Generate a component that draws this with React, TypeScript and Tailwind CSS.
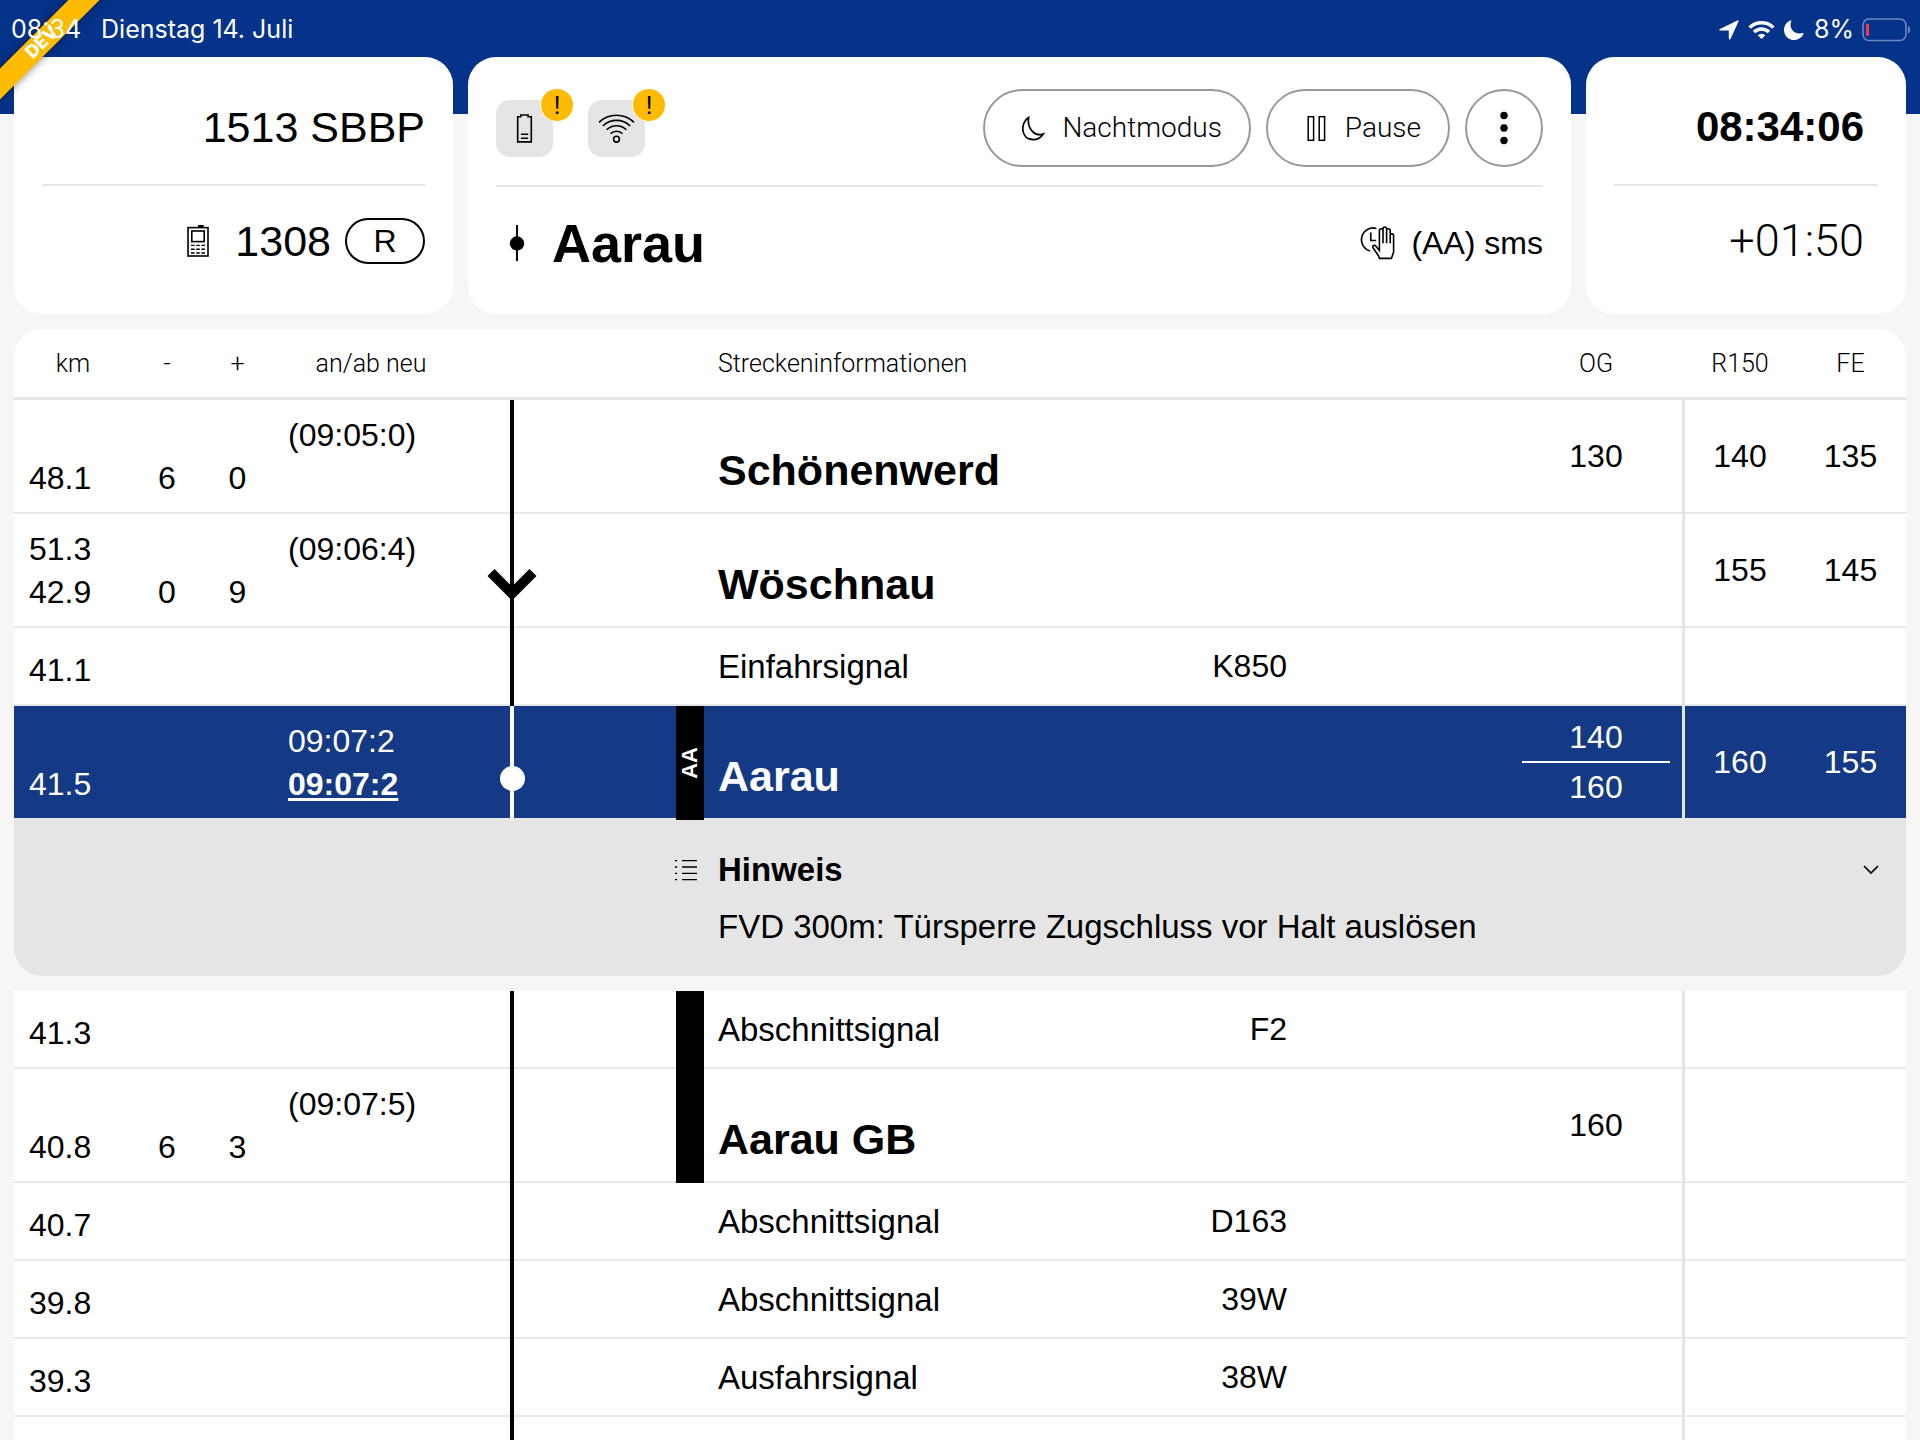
import type { ReactNode } from "react";
import { clsx } from "clsx";

type Row = {
  km: string[];
  minus?: string;
  plus?: string;
  times?: string[];
  name: string;
  value?: string;
  station?: boolean;
  og?: string[];
  r150?: string;
  fe?: string;
  marker?: "arrow" | "dot";
  bar?: boolean;
  barLabel?: string;
  active?: boolean;
};

const rowsBefore: Row[] = [
  { km: ["48.1"], minus: "6", plus: "0", times: ["(09:05:0)", ""], name: "Schönenwerd", station: true, og: ["130"], r150: "140", fe: "135" },
  { km: ["51.3", "42.9"], minus: "0", plus: "9", times: ["(09:06:4)", ""], name: "Wöschnau", station: true, r150: "155", fe: "145", marker: "arrow" },
  { km: ["41.1"], name: "Einfahrsignal", value: "K850" },
  { km: ["41.5"], times: ["09:07:2", "09:07:2"], name: "Aarau", station: true, og: ["140", "160"], r150: "160", fe: "155", marker: "dot", bar: true, barLabel: "AA", active: true },
];

const rowsAfter: Row[] = [
  { km: ["41.3"], name: "Abschnittsignal", value: "F2", bar: true },
  { km: ["40.8"], minus: "6", plus: "3", times: ["(09:07:5)", ""], name: "Aarau GB", station: true, og: ["160"], bar: true },
  { km: ["40.7"], name: "Abschnittsignal", value: "D163" },
  { km: ["39.8"], name: "Abschnittsignal", value: "39W" },
  { km: ["39.3"], name: "Ausfahrsignal", value: "38W" },
  { km: [], name: "" },
];

const light = "font-['Roboto','Liberation_Sans',sans-serif] font-light";

function PhoneIcon() {
  return (
    <svg width="22" height="32" viewBox="0 0 22 32" fill="none" stroke="#000" strokeWidth="1.6">
      <rect x="1" y="2.6" width="20" height="28.4" />
      <path d="M11 1.4h5.6" strokeWidth="2.8" />
      <rect x="4.8" y="6" width="12.4" height="10.6" />
      <path d="M4 20.4h14M4 24.2h14M4 28h14" strokeDasharray="3.6 1.6" strokeWidth="1.4" />
    </svg>
  );
}

function BatteryIcon() {
  return (
    <svg width="29" height="29" viewBox="0 0 29 29" fill="none" stroke="#000" strokeWidth="1.6">
      <path d="M7.7 2.7h3.1V1h7.3v1.7h3.2v25.2H7.7z" />
      <path d="M11 20.3h7.2M11 24.2h7.2" />
    </svg>
  );
}

function SignalIcon() {
  return (
    <svg width="37" height="29" viewBox="0 0 37 29" fill="none" stroke="#000" strokeWidth="1.6">
      <circle cx="18.5" cy="25.2" r="2.9" />
      <path d="M12.6 19.6a8.4 8.4 0 0 1 11.8 0M8.6 15.8a14 14 0 0 1 19.8 0M4.8 12a19.6 19.6 0 0 1 27.4 0M1 8.4a25 25 0 0 1 35 0" />
    </svg>
  );
}

function NightIcon() {
  return (
    <svg width="29" height="29" viewBox="0 0 29 29" fill="none" stroke="#000" strokeWidth="1.7">
      <path d="M9.6 3.6C1 8.6 1.4 25.6 14.2 25.6c4.6 0 8-2.4 10-5.6C16 23 7.8 14.6 9.6 3.6z" />
    </svg>
  );
}

function PauseIcon() {
  return (
    <svg width="29" height="29" viewBox="0 0 29 29" fill="none" stroke="#000" strokeWidth="1.5">
      <rect x="6.2" y="2.7" width="5.4" height="23.6" />
      <rect x="17.2" y="2.7" width="5.4" height="23.6" />
    </svg>
  );
}

function ClockHandIcon() {
  return (
    <svg width="36" height="34" viewBox="0 0 36 34" fill="none" stroke="#000" strokeWidth="1.6">
      <path d="M17.4 2.4A11.6 11.6 0 1 0 11 25" />
      <path d="M11.8 6.5v8h5.4" />
      <path d="M20.4 32.4C20 28.6 15.6 25 14 21.6c-.8-2 1.4-3.2 3-1.4l3.4 4.2V4.6a1.8 1.8 0 0 1 3.6 0v12.6V2.8a1.8 1.8 0 0 1 3.6 0v14.4V4.6a1.8 1.8 0 0 1 3.6 0v12.6V9.6a1.7 1.7 0 0 1 3.4 0v16.6l-2.2 6.2z" />
    </svg>
  );
}

function ListIcon() {
  return (
    <svg width="24" height="24" viewBox="0 0 24 24" stroke="#000" strokeWidth="1.3">
      <path d="M1 2.6h2.2M8 2.6h15M1 9h2.2M8 9h15M1 15.4h2.2M8 15.4h15M1 21.6h2.2M8 21.6h15" />
    </svg>
  );
}

function StatusBar() {
  return (
    <div className="relative z-10 flex h-[57px] items-center justify-between pr-[9px] pl-[11px] pt-0.5 font-['Inter',sans-serif] text-[25px] text-white">
      <div className="flex gap-5">
        <span>08:34</span>
        <span>Dienstag 14. Juli</span>
      </div>
      <div className="flex items-center">
        <svg width="20" height="20" viewBox="0 0 20 20" fill="#fff">
          <path d="M18.4.4c.9-.4 1.5.3 1.1 1.1l-8 17.4c-.4.9-1.7.7-1.7-.4v-7.9H1.3c-1.1 0-1.3-1.3-.4-1.7z" />
        </svg>
        <svg className="ml-2" width="29" height="20" viewBox="0 0 29 20" fill="none" stroke="#fff" strokeWidth="3.4">
          <path d="M2.6 7.6a17 17 0 0 1 23.8 0M7 12a10.8 10.8 0 0 1 15 0" />
          <path d="M14.5 19l-3.8-3.8a5.4 5.4 0 0 1 7.6 0z" fill="#fff" stroke="none" />
        </svg>
        <svg className="ml-2" width="20" height="20" viewBox="0 0 20 20" fill="#fff">
          <path d="M6.3.4c.6-.3 1.2.2.9.9C4.4 8.4 10.6 15.4 18.6 13c.7-.2 1.2.4.9 1C17.8 17.6 14.3 20 10.2 20 4.6 20 0 15.6 0 9.9 0 5.6 2.6 2 6.3.4z" />
        </svg>
        <span className="ml-[10px]">8%</span>
        <svg className="ml-2" width="49" height="24" viewBox="0 0 49 24" fill="none">
          <rect x="1" y="1" width="43" height="21.5" rx="6" stroke="#6d89be" strokeWidth="1.6" />
          <path d="M46 8.2c3 .8 3 6.4 0 7.2z" fill="#6d89be" />
          <rect x="4" y="5.5" width="3" height="12.5" rx="1.5" fill="#f0384f" />
        </svg>
      </div>
    </div>
  );
}

function WarningChip({ label, children }: { label: string; children: ReactNode }) {
  return (
    <div role="img" aria-label={label} className="relative flex size-[57px] items-center justify-center rounded-[14px] bg-[#e5e5e5]">
      {children}
      <span className="absolute -top-3 -right-[21px] flex size-[34px] items-center justify-center rounded-full border border-white bg-[#ffbb00] text-[26px] leading-none">
        !
      </span>
    </div>
  );
}

function PillButton({ icon, children }: { icon: ReactNode; children: ReactNode }) {
  return (
    <button
      type="button"
      className={clsx(light, "flex h-[78px] items-center gap-[14px] rounded-full border-2 border-[#999] pr-[27px] pl-[34px] text-[28px]")}
    >
      {icon}
      {children}
    </button>
  );
}

function Header() {
  return (
    <header className="flex gap-[15px] px-[14px]">
      <section className="w-[439px] rounded-[28px] bg-white px-7 pt-[46px] text-right text-[43px] leading-[48px]">
        <div className="border-b-2 border-[#e5e5e5] pb-[33px]">1513 SBBP</div>
        <div className="flex items-center justify-end pt-[31px]">
          <PhoneIcon />
          <span className="ml-[26px]">1308</span>
          <span className="ml-[14px] flex h-[46px] w-20 items-center justify-center rounded-full border-2 border-black text-[32px]">R</span>
        </div>
      </section>

      <section className="flex-1 rounded-[28px] bg-white px-7 pt-8 pb-[41px]">
        <div className="flex items-center justify-between border-b-2 border-[#e5e5e5] pb-[18px]">
          <div className="flex gap-[35px]">
            <WarningChip label="Akku schwach">
              <BatteryIcon />
            </WarningChip>
            <WarningChip label="Verbindung schwach">
              <SignalIcon />
            </WarningChip>
          </div>
          <div className="flex gap-[15px]">
            <PillButton icon={<NightIcon />}>Nachtmodus</PillButton>
            <PillButton icon={<PauseIcon />}>Pause</PillButton>
            <button type="button" aria-label="Menü" className="flex size-[78px] items-center justify-center rounded-full border-2 border-[#999]">
              <svg width="8" height="34" viewBox="0 0 8 34">
                <circle cx="4" cy="4.5" r="3.7" />
                <circle cx="4" cy="17" r="3.7" />
                <circle cx="4" cy="29.5" r="3.7" />
              </svg>
            </button>
          </div>
        </div>
        <div className="flex items-center justify-between pt-[26px]">
          <div className="flex items-center gap-[14px]">
            <svg width="42" height="36" viewBox="0 0 42 36">
              <path d="M21 0v36" stroke="#000" strokeWidth="2" />
              <circle cx="21" cy="18.5" r="7.2" />
            </svg>
            <h1 className="text-[54px] leading-[60px] font-bold">Aarau</h1>
          </div>
          <div className="flex items-center gap-4 text-[32px] leading-[43px]">
            <ClockHandIcon />
            (AA) sms
          </div>
        </div>
      </section>

      <section className="w-80 rounded-[28px] bg-white px-7 pt-[46px] text-right text-[42px] leading-[48px]">
        <div className="border-b-2 border-[#e5e5e5] pr-[14px] pb-[33px] font-bold">08:34:06</div>
        <div className={clsx(light, "pt-[31px] pr-[14px] text-[45px]")}>+01:50</div>
      </section>
    </header>
  );
}

function RouteLine({ marker, active }: Pick<Row, "marker" | "active">) {
  return (
    <div className="absolute inset-x-0 top-0 -bottom-0.5 flex justify-center">
      <div className={clsx("w-1", active ? "bg-white" : "bg-black")} />
      {marker === "arrow" && (
        <svg className="absolute top-[54px]" width="50" height="34" viewBox="0 0 50 34" fill="none" stroke="#000" strokeWidth="10">
          <path d="M4 4.5l21 21 21-21" />
        </svg>
      )}
      {marker === "dot" && <div className="absolute top-[60px] size-[25px] rounded-full bg-white" />}
    </div>
  );
}

function RouteRow({ row }: { row: Row }) {
  const { active } = row;
  const cell = clsx("border-b-2 border-[#e8e8e8]", active ? "bg-[#143a85]" : "bg-white");
  const bottom = clsx(cell, "pb-3 align-bottom");
  return (
    <tr className={clsx(row.station ? "h-[114px]" : "h-[78px]", active && "text-white")}>
      <td className={clsx(bottom, "pl-[15px]")}>
        {row.km.map((k) => (
          <div key={k}>{k}</div>
        ))}
      </td>
      <td className={clsx(bottom, "text-center")}>{row.minus}</td>
      <td className={clsx(bottom, "text-center")}>{row.plus}</td>
      <td className={clsx(bottom, "pl-[15px]")}>
        {row.times?.map((t, i) => (
          <div key={i} className={clsx("h-[43px]", i === 1 && "font-bold underline decoration-[3px] underline-offset-[3px]")}>
            {t}
          </div>
        ))}
      </td>
      <td className={clsx(cell, "relative")}>
        <RouteLine marker={row.marker} active={active} />
      </td>
      <td className={cell} />
      <td className={clsx(cell, "relative")}>
        {row.bar && (
          <div className="absolute inset-x-0 top-0 -bottom-0.5 flex items-center justify-center bg-black">
            <span className="rotate-180 text-[22px] leading-none font-bold [writing-mode:vertical-rl]">{row.barLabel}</span>
          </div>
        )}
      </td>
      {row.station ? (
        <td className={clsx(cell, "pb-[14px] pl-[14px] align-bottom text-[43px] leading-[56px] font-bold")} colSpan={2}>
          {row.name}
        </td>
      ) : (
        <>
          <td className={clsx(cell, "pl-[14px] text-[33px]")}>{row.name}</td>
          <td className={clsx(cell, "pr-[14px] text-right")}>{row.value}</td>
        </>
      )}
      <td className={cell} />
      <td className={clsx(cell, "border-r-[3px] border-r-[#e5e5e5] px-3 text-center")}>
        {row.og?.map((v, i) => (
          <div key={v} className={clsx(row.og!.length > 1 && "leading-[48px]", i > 0 && "border-t-2 border-white")}>
            {v}
          </div>
        ))}
      </td>
      <td className={clsx(cell, "text-center")}>{row.r150}</td>
      <td className={clsx(cell, "text-center")}>{row.fe}</td>
    </tr>
  );
}

function RouteTable() {
  const th = "border-b-[3px] border-[#e5e5e5] bg-white font-light";
  return (
    <table className="w-full table-fixed border-separate border-spacing-0 text-[32px] leading-[43px]">
      <colgroup>
        <col className="w-[118px]" />
        <col className="w-[70px]" />
        <col className="w-[71px]" />
        <col className="w-[196px]" />
        <col className="w-[86px]" />
        <col className="w-[121px]" />
        <col className="w-7" />
        <col />
        <col className="w-[200px]" />
        <col className="w-[209px]" />
        <col className="w-[175px]" />
        <col className="w-[110px]" />
        <col className="w-[111px]" />
      </colgroup>
      <thead className={clsx(light, "text-[25px]")}>
        <tr className="h-[71px]">
          <th className={clsx(th, "rounded-tl-[28px]")}>km</th>
          <th className={th}>-</th>
          <th className={th}>+</th>
          <th className={th}>an/ab neu</th>
          <th className={th} />
          <th className={th} />
          <th className={th} />
          <th className={clsx(th, "pl-[14px] text-left")} colSpan={3}>
            Streckeninformationen
          </th>
          <th className={clsx(th, "pr-[3px]")}>OG</th>
          <th className={th}>R150</th>
          <th className={clsx(th, "rounded-tr-[28px]")}>FE</th>
        </tr>
      </thead>
      <tbody>
        {rowsBefore.map((row, i) => (
          <RouteRow key={i} row={row} />
        ))}
        <tr>
          <td colSpan={13} className="pb-[15px]">
            <div className="flex rounded-b-[28px] bg-[#e5e5e5] py-7 pr-[21px] pl-[660px] text-[33px]">
              <div className="flex h-[43px] items-center">
                <ListIcon />
              </div>
              <div className="ml-5 flex-1">
                <h2 className="font-bold">Hinweis</h2>
                <p className="mt-[14px]">FVD 300m: Türsperre Zugschluss vor Halt auslösen</p>
              </div>
              <button type="button" aria-label="Zuklappen" className="flex h-[43px] w-[29px] items-center justify-center">
                <svg width="16" height="10" viewBox="0 0 16 10" fill="none" stroke="#000" strokeWidth="1.7">
                  <path d="M1 1l7 7 7-7" />
                </svg>
              </button>
            </div>
          </td>
        </tr>
        {rowsAfter.map((row, i) => (
          <RouteRow key={i} row={row} />
        ))}
      </tbody>
    </table>
  );
}

export default function App() {
  return (
    <div className="relative h-screen overflow-hidden bg-[#f6f6f6] bg-[linear-gradient(#053389_114px,#f6f6f6_114px)] font-['Liberation_Sans',Arial,sans-serif] text-black">
      <StatusBar />
      <Header />
      <main className="mt-[15px] px-[14px]">
        <RouteTable />
      </main>
      <div className="absolute top-[31px] -left-[38px] flex h-[22px] w-40 -rotate-45 items-center justify-center bg-[#ffbb00] font-['Inter',sans-serif] text-lg font-extrabold text-white shadow-[0_0_8px_rgba(0,0,0,0.5)]">
        DEV
      </div>
    </div>
  );
}
